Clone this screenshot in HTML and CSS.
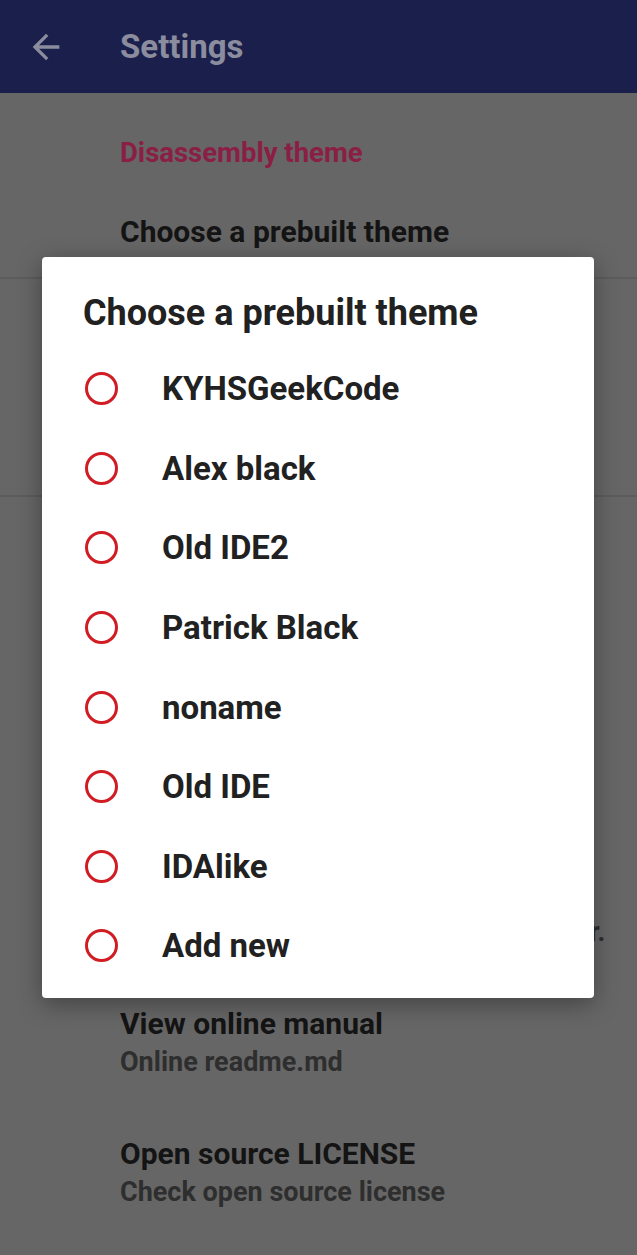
FILE: index.html
```html
<!DOCTYPE html>
<html lang="en">
<head>
    <meta charset="UTF-8">
    <meta name="viewport" content="width=device-width, initial-scale=1.0">
    <title>Settings</title>
    <link rel="stylesheet" href="styles.css">
</head>
<body>

<div class="toolbar">
    <svg class="back-icon" viewBox="0 0 24 24" width="40" height="40">
        <path d="M20 11H7.83l5.59-5.59L12 4l-8 8 8 8 1.41-1.41L7.83 13H20v-2z"/>
    </svg>
    <span class="toolbar-title">Settings</span>
</div>

<div class="settings">
    <div class="section first-section">
        <div class="category">Disassembly theme</div>
        <div class="pref">
            <div class="pref-title">Choose a prebuilt theme</div>
        </div>
    </div>
    <div class="divider"></div>
    <div class="section middle-section">
        <div class="category">Customize</div>
        <div class="pref">
            <div class="pref-title">Edit theme</div>
            <div class="pref-summary">Edit the current theme</div>
        </div>
    </div>
    <div class="divider"></div>
    <div class="section">
        <div class="category tall">Help</div>
        <div class="pref">
            <div class="pref-title">Show error details</div>
            <div class="pref-summary">Show stack trace on errors</div>
        </div>
        <div class="pref">
            <div class="pref-title">Check for updates</div>
            <div class="pref-summary">Find the latest release</div>
        </div>
        <div class="pref">
            <div class="pref-title">Report a bug</div>
            <div class="pref-summary">Send the crash log to the app developer.</div>
        </div>
        <div class="pref">
            <div class="pref-title">View online manual</div>
            <div class="pref-summary">Online readme.md</div>
        </div>
        <div class="pref">
            <div class="pref-title">Open source LICENSE</div>
            <div class="pref-summary">Check open source license</div>
        </div>
    </div>
</div>

<div class="dialog">
    <h2 class="dialog-title">Choose a prebuilt theme</h2>
    <div class="option"><span class="radio"></span><span class="option-label">KYHSGeekCode</span></div>
    <div class="option"><span class="radio"></span><span class="option-label">Alex black</span></div>
    <div class="option"><span class="radio"></span><span class="option-label">Old IDE2</span></div>
    <div class="option"><span class="radio"></span><span class="option-label">Patrick Black</span></div>
    <div class="option"><span class="radio"></span><span class="option-label">noname</span></div>
    <div class="option"><span class="radio"></span><span class="option-label">Old IDE</span></div>
    <div class="option"><span class="radio"></span><span class="option-label">IDAlike</span></div>
    <div class="option"><span class="radio"></span><span class="option-label">Add new</span></div>
</div>

</body>
</html>
```

FILE: styles.css
```css
body {
    font-family: Roboto, "Noto Sans", sans-serif;
    background-color: #666666;
    margin: 0;
    height: 1255px;
    overflow: hidden;
}

.toolbar {
    background-color: #1a1f4c;
    height: 93px;
    display: flex;
    align-items: center;
    padding-left: 26px;
    box-sizing: border-box;
}

.back-icon {
    fill: #8b8d9e;
    margin-right: 54px;
}

.toolbar-title {
    color: #8b8d9e;
    font-size: 33px;
    font-weight: bold;
}

.settings {
    padding-left: 120px;
    white-space: nowrap;
}

.section.first-section {
    height: 184px;
}

.section.middle-section {
    height: 216px;
}

.divider {
    height: 2px;
    margin-left: -120px;
    background-color: #5c5c5c;
}

.category {
    color: #8a1e45;
    font-size: 27.5px;
    font-weight: bold;
    line-height: 36px;
    padding-top: 42px;
}

.category.tall {
    padding-top: 0;
    height: 91px;
}

.first-section .pref {
    padding: 43px 0 27px;
}

.pref {
    padding: 28px 0;
}

.pref-title {
    color: #141414;
    font-size: 30px;
    font-weight: bold;
    line-height: 36px;
}

.pref-summary {
    color: #2e2e2e;
    font-size: 27px;
    font-weight: bold;
    line-height: 36px;
    margin-top: 2px;
}

.dialog {
    position: absolute;
    left: 42px;
    top: 257px;
    width: 552px;
    height: 741px;
    background-color: #fff;
    border-radius: 4px;
    box-shadow: 0 6px 24px rgba(0, 0, 0, 0.35);
}

.dialog-title {
    margin: 0;
    padding: 36px 0 16px 41px;
    line-height: 40px;
    font-size: 36px;
    font-weight: bold;
    color: #212121;
}

.option {
    height: 79.6px;
    display: flex;
    align-items: center;
    padding-left: 43px;
}

.radio {
    width: 27px;
    height: 27px;
    border: 3px solid #d01c22;
    border-radius: 50%;
    margin-right: 44px;
}

.option-label {
    font-size: 33px;
    font-weight: bold;
    color: #212121;
}
```
